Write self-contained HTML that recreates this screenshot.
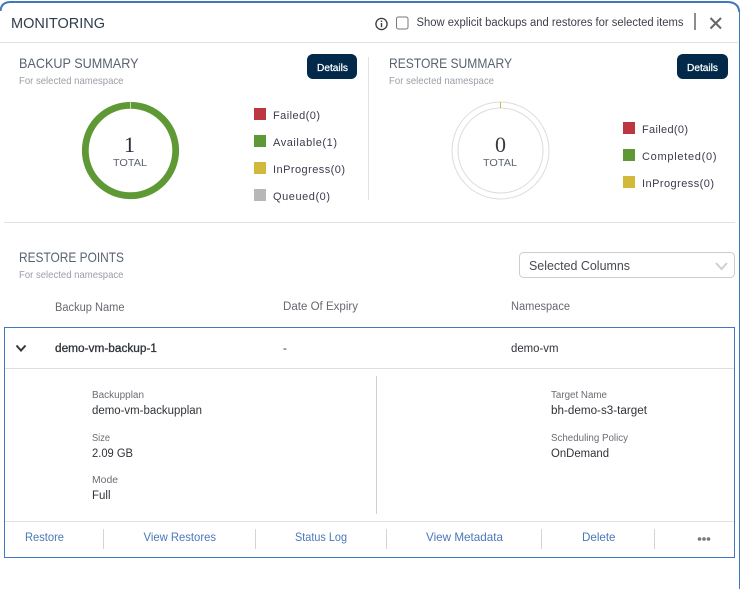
<!DOCTYPE html>
<html lang="en">
<head>
<meta charset="utf-8">
<title>Monitoring</title>
<style>
html,body{margin:0;padding:0;background:#fff;width:740px;height:589px;overflow:hidden}
svg{display:block}
text{font-family:"Liberation Sans",sans-serif}
.h{font-size:14px;fill:#596270}
.s{font-size:10.5px;fill:#9a9ea6}
.l{font-size:11px;fill:#3d3a4c}
.c{font-size:11.5px;fill:#66696f}
.k{font-size:10px;fill:#6a6d73}
.v{font-size:11.5px;fill:#2f3338}
.a{font-size:12px;fill:#4a78bb}
.b{font-size:10.5px;fill:#fff;stroke:#fff;stroke-width:.25}
.t{font-size:10.5px;fill:#5d6470}
</style>
</head>
<body>
<svg width="740" height="589" viewBox="0 0 740 589" xmlns="http://www.w3.org/2000/svg">
<!-- outer frame -->
<path d="M0.5 11 Q1 2 11 2 H727 Q738.500 2 739.300 12" fill="none" stroke="#3f78bf" stroke-width="2"/>
<rect x="739" y="11" width="1" height="578" fill="#3f78bf"/>
<rect x="0" y="42" width="738" height="1" fill="#e0e0e0"/>
<rect x="4" y="222" width="731" height="1" fill="#e2e2e2"/>

<!-- header -->
<text x="11" y="28" font-size="15" fill="#2e3d4d" textLength="94" lengthAdjust="spacingAndGlyphs">MONITORING</text>
<circle cx="381.5" cy="24" r="5.6" fill="none" stroke="#3a3a3a" stroke-width="1.3"/>
<rect x="380.8" y="23" width="1.4" height="4.2" fill="#3a3a3a"/>
<rect x="380.8" y="20.6" width="1.4" height="1.4" fill="#3a3a3a"/>
<rect x="396.5" y="17" width="11.5" height="12" rx="2" fill="#fff" stroke="#777" stroke-width="1"/>
<text x="416.5" y="26" font-size="11.5" fill="#3c3f4a" textLength="267" lengthAdjust="spacingAndGlyphs">Show explicit backups and restores for selected items</text>
<rect x="694" y="13" width="2" height="17" fill="#8d8d8d"/>
<path d="M710.5 18 L721 28.5 M721 18 L710.5 28.5" stroke="#666" stroke-width="2" fill="none"/>

<!-- backup summary -->
<text class="h" x="19" y="68" textLength="119.500" lengthAdjust="spacingAndGlyphs">BACKUP SUMMARY</text>
<text class="s" x="19" y="84" textLength="104.500" lengthAdjust="spacingAndGlyphs">For selected namespace</text>
<rect x="307" y="54" width="50" height="25" rx="6" fill="#02294a"/>
<text class="b" x="317" y="71" textLength="31" lengthAdjust="spacingAndGlyphs">Details</text>
<rect x="368" y="57" width="1" height="143" fill="#e2e2e2"/>
<circle cx="130.500" cy="150.500" r="45.200" fill="none" stroke="#5f9935" stroke-width="6.800"/>
<rect x="130" y="102" width="1" height="7" fill="#c9d9bb"/>
<text x="129.500" y="152" text-anchor="middle" font-size="22" fill="#2c2c3a" style="font-family:'Liberation Serif',serif">1</text>
<text class="t" x="113" y="166" textLength="34" lengthAdjust="spacingAndGlyphs">TOTAL</text>
<rect x="254" y="108" width="12" height="12" fill="#bb3741"/>
<rect x="254" y="135" width="12" height="12" fill="#5f9935"/>
<rect x="254" y="162" width="12" height="12" fill="#d2b93a"/>
<rect x="254" y="189" width="12" height="12" fill="#b5b7b9"/>
<text class="l" x="273" y="119" textLength="47" lengthAdjust="spacing">Failed(0)</text>
<text class="l" x="273" y="146" textLength="64" lengthAdjust="spacing">Available(1)</text>
<text class="l" x="273" y="173" textLength="72" lengthAdjust="spacing">InProgress(0)</text>
<text class="l" x="273" y="200" textLength="57" lengthAdjust="spacing">Queued(0)</text>

<!-- restore summary -->
<text class="h" x="389" y="68" textLength="123" lengthAdjust="spacingAndGlyphs">RESTORE SUMMARY</text>
<text class="s" x="389" y="84" textLength="105" lengthAdjust="spacingAndGlyphs">For selected namespace</text>
<rect x="677" y="54" width="51" height="25" rx="6" fill="#02294a"/>
<text class="b" x="687" y="71" textLength="31" lengthAdjust="spacingAndGlyphs">Details</text>
<circle cx="500.500" cy="150.500" r="48.500" fill="none" stroke="#dcdcdc" stroke-width="1"/>
<circle cx="500.500" cy="150.500" r="42.500" fill="none" stroke="#dcdcdc" stroke-width="1"/>
<rect x="500" y="102" width="1" height="6" fill="#d2b93a"/>
<text x="500.500" y="152" text-anchor="middle" font-size="22" fill="#3a3a44" style="font-family:'Liberation Serif',serif">0</text>
<text class="t" x="483" y="166" textLength="34" lengthAdjust="spacingAndGlyphs">TOTAL</text>
<rect x="623" y="122" width="12" height="12" fill="#bb3741"/>
<rect x="623" y="149" width="12" height="12" fill="#5f9935"/>
<rect x="623" y="176" width="12" height="12" fill="#d2b93a"/>
<text class="l" x="642" y="133" textLength="46" lengthAdjust="spacing">Failed(0)</text>
<text class="l" x="642" y="160" textLength="74.500" lengthAdjust="spacing">Completed(0)</text>
<text class="l" x="642" y="187" textLength="72" lengthAdjust="spacing">InProgress(0)</text>

<!-- restore points -->
<text class="h" x="19" y="262" textLength="105" lengthAdjust="spacingAndGlyphs">RESTORE POINTS</text>
<text class="s" x="19" y="278" textLength="104.500" lengthAdjust="spacingAndGlyphs">For selected namespace</text>
<rect x="519.500" y="252.500" width="215" height="25" rx="4" fill="#fff" stroke="#cdcdcd"/>
<text x="529" y="270" font-size="13" fill="#474a52" textLength="101" lengthAdjust="spacingAndGlyphs">Selected Columns</text>
<path d="M716 263 L721.500 269 L727 263" fill="none" stroke="#cfcfcf" stroke-width="2"/>

<text class="c" x="55" y="311" textLength="69.500" lengthAdjust="spacingAndGlyphs">Backup Name</text>
<text class="c" x="283" y="310" textLength="75" lengthAdjust="spacingAndGlyphs">Date Of Expiry</text>
<text class="c" x="511" y="310" textLength="59" lengthAdjust="spacingAndGlyphs">Namespace</text>

<!-- expanded row -->
<rect x="4.500" y="327.500" width="730" height="230" fill="#fff" stroke="#3f78bf" stroke-width="1"/>
<rect x="5" y="368" width="729" height="1" fill="#dedede"/>
<path d="M16.500 345.500 L21 350.500 L25.500 345.500" fill="none" stroke="#33383d" stroke-width="2"/>
<text x="55" y="352" font-size="11.500" fill="#2f3338" stroke="#2f3338" stroke-width=".3" textLength="102" lengthAdjust="spacingAndGlyphs">demo-vm-backup-1</text>
<text class="v" x="283" y="352">-</text>
<text class="v" x="511" y="352" textLength="47.500" lengthAdjust="spacingAndGlyphs">demo-vm</text>

<text class="k" x="92" y="398" textLength="52" lengthAdjust="spacingAndGlyphs">Backupplan</text>
<text class="v" x="92" y="414" textLength="110" lengthAdjust="spacingAndGlyphs">demo-vm-backupplan</text>
<text class="k" x="92" y="441" textLength="18" lengthAdjust="spacingAndGlyphs">Size</text>
<text class="v" x="92" y="457" textLength="41" lengthAdjust="spacingAndGlyphs">2.09 GB</text>
<text class="k" x="92" y="483" textLength="26" lengthAdjust="spacingAndGlyphs">Mode</text>
<text class="v" x="92" y="499" textLength="18.500" lengthAdjust="spacingAndGlyphs">Full</text>

<rect x="376" y="376" width="1" height="138" fill="#cfcfcf"/>

<text class="k" x="551" y="398" textLength="56" lengthAdjust="spacingAndGlyphs">Target Name</text>
<text class="v" x="551" y="414" textLength="96" lengthAdjust="spacingAndGlyphs">bh-demo-s3-target</text>
<text class="k" x="551" y="441" textLength="77" lengthAdjust="spacingAndGlyphs">Scheduling Policy</text>
<text class="v" x="551" y="457" textLength="58" lengthAdjust="spacingAndGlyphs">OnDemand</text>

<rect x="5" y="521" width="729" height="1" fill="#e2e2e2"/>
<rect x="103" y="529" width="1" height="20" fill="#d4d4d4"/>
<rect x="255" y="529" width="1" height="20" fill="#d4d4d4"/>
<rect x="386" y="529" width="1" height="20" fill="#d4d4d4"/>
<rect x="541" y="529" width="1" height="20" fill="#d4d4d4"/>
<rect x="654" y="529" width="1" height="20" fill="#d4d4d4"/>
<text class="a" x="25" y="541" textLength="39" lengthAdjust="spacingAndGlyphs">Restore</text>
<text class="a" x="143.500" y="541" textLength="72.500" lengthAdjust="spacingAndGlyphs">View Restores</text>
<text class="a" x="295" y="541" textLength="52" lengthAdjust="spacingAndGlyphs">Status Log</text>
<text class="a" x="426" y="541" textLength="77" lengthAdjust="spacingAndGlyphs">View Metadata</text>
<text class="a" x="582" y="541" textLength="33.500" lengthAdjust="spacingAndGlyphs">Delete</text>
<circle cx="699.500" cy="539" r="1.800" fill="#777"/>
<circle cx="704" cy="539" r="1.800" fill="#777"/>
<circle cx="708.500" cy="539" r="1.800" fill="#777"/>
</svg>
</body>
</html>
